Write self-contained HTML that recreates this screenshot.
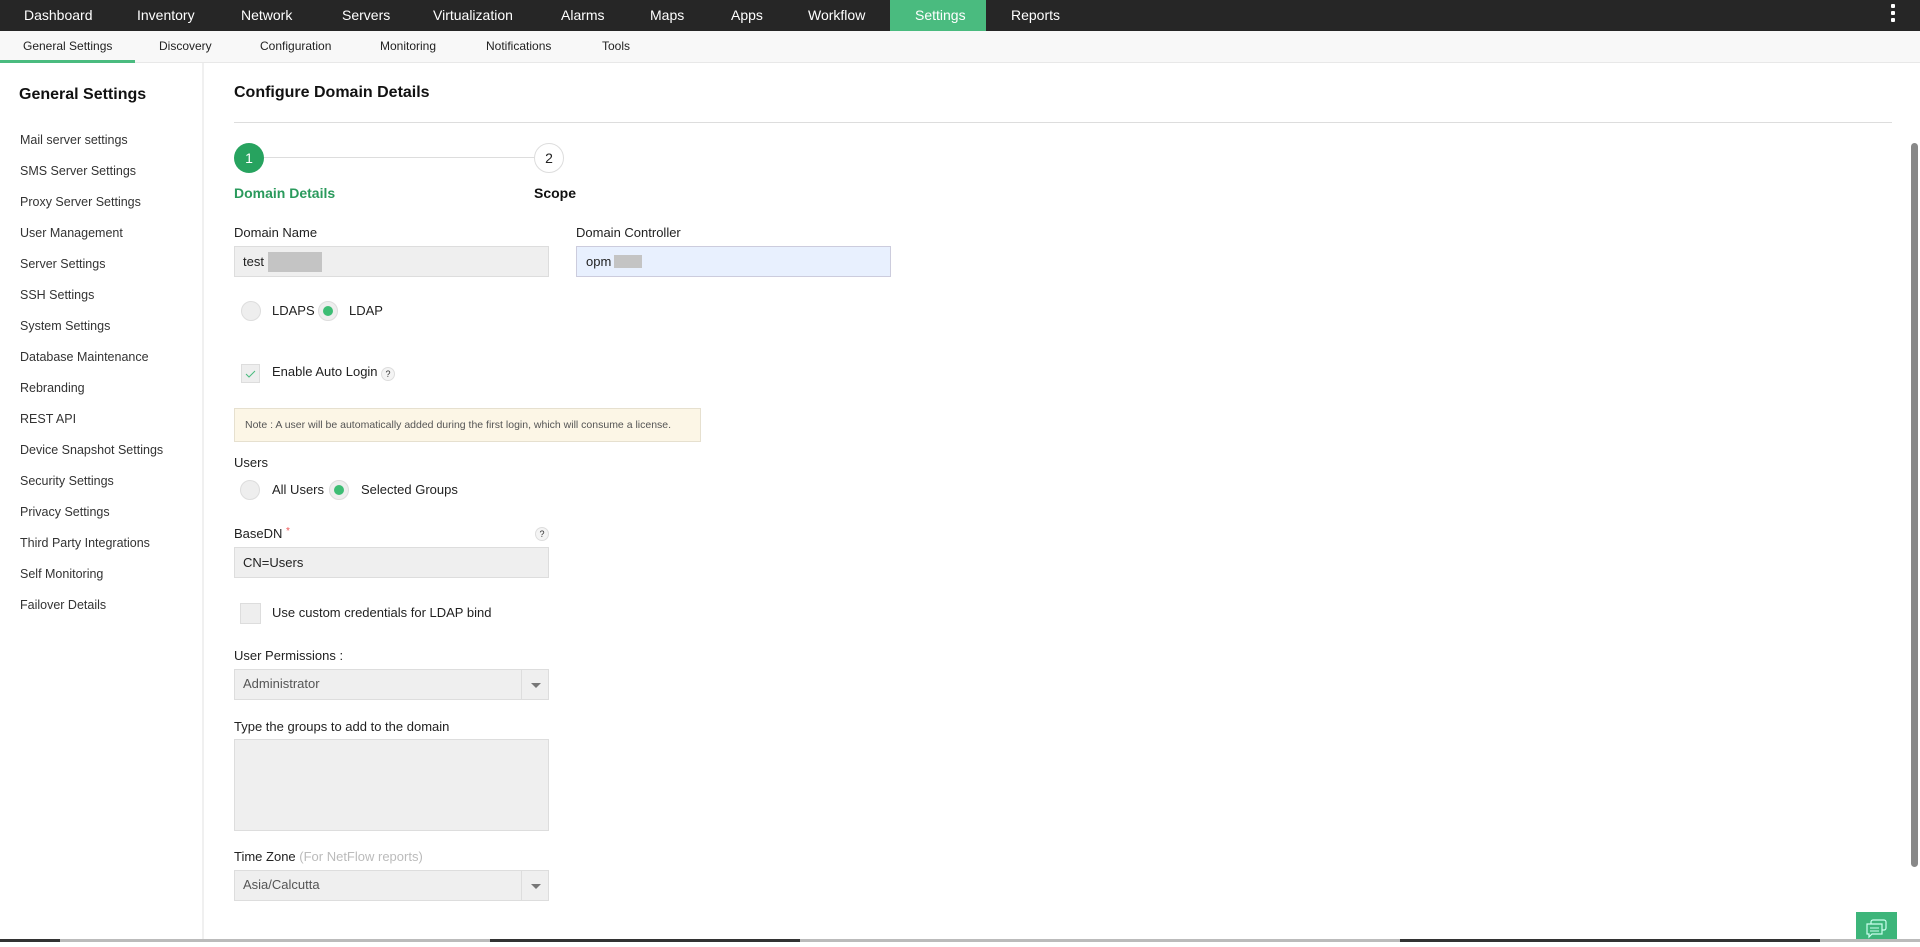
<!DOCTYPE html>
<html><head><meta charset="utf-8"><style>
*{margin:0;padding:0;box-sizing:border-box}
body{width:1920px;height:942px;overflow:hidden;background:#fff;font-family:"Liberation Sans",sans-serif;color:#222;position:relative}
.a{position:absolute;white-space:nowrap}
.top{left:0;top:0;width:1920px;height:31px;background:#262626}
.top span{position:absolute;top:7px;color:#fff;font-size:14px}
.sub{left:0;top:31px;width:1920px;height:32px;background:#f8f8f8;border-bottom:1px solid #e8e8e8}
.sub span{position:absolute;top:8px;font-size:12px;color:#222}
.side{left:0;top:63px;width:204px;height:879px;background:#fff;border-right:2px solid #f0f0f0}
.si{left:20px;font-size:12.5px;color:#333}
.lbl{font-size:13px;color:#222}
.inp{background:#efefef;border:1px solid #ddd}
.rad{width:20px;height:20px;border-radius:50%;background:#eee;border:1px solid #ddd}
.rad.on::after{content:"";position:absolute;left:4px;top:4px;width:10px;height:10px;border-radius:50%;background:#3dbd74}
.q{width:14px;height:14px;border-radius:50%;border:1px solid #ddd;background:#f4f4f4;font-size:9px;text-align:center;line-height:12px;color:#333}
.arr{position:absolute;right:0;top:0;width:27px;height:100%;border-left:1px solid #ddd}
.arr::after{content:"";position:absolute;left:9px;top:13px;border-left:5px solid transparent;border-right:5px solid transparent;border-top:5px solid #777}
</style></head><body>
<div class="a top">
<span style="left:24px">Dashboard</span><span style="left:137px">Inventory</span><span style="left:241px">Network</span><span style="left:342px">Servers</span><span style="left:433px">Virtualization</span><span style="left:561px">Alarms</span><span style="left:650px">Maps</span><span style="left:731px">Apps</span><span style="left:808px">Workflow</span>
<div style="position:absolute;left:890px;top:0;width:96px;height:31px;background:#4abb7f"></div>
<span style="left:915px">Settings</span><span style="left:1011px">Reports</span>
<div style="position:absolute;left:1891px;top:4px;width:4px;height:4px;background:#fff;border-radius:1px;box-shadow:0 7px 0 #fff,0 14px 0 #fff"></div>
</div>
<div class="a sub">
<span style="left:23px">General Settings</span><span style="left:159px">Discovery</span><span style="left:260px">Configuration</span><span style="left:380px">Monitoring</span><span style="left:486px">Notifications</span><span style="left:602px">Tools</span>
<div style="position:absolute;left:0;top:29px;width:135px;height:3px;background:#4abb7f"></div>
</div>
<div class="a side"></div>
<div class="a" style="left:19px;top:86px;font-size:16px;font-weight:bold;color:#111">General Settings</div>
<div class="a si" style="top:133px">Mail server settings</div>
<div class="a si" style="top:164px">SMS Server Settings</div>
<div class="a si" style="top:195px">Proxy Server Settings</div>
<div class="a si" style="top:226px">User Management</div>
<div class="a si" style="top:257px">Server Settings</div>
<div class="a si" style="top:288px">SSH Settings</div>
<div class="a si" style="top:319px">System Settings</div>
<div class="a si" style="top:350px">Database Maintenance</div>
<div class="a si" style="top:381px">Rebranding</div>
<div class="a si" style="top:412px">REST API</div>
<div class="a si" style="top:443px">Device Snapshot Settings</div>
<div class="a si" style="top:474px">Security Settings</div>
<div class="a si" style="top:505px">Privacy Settings</div>
<div class="a si" style="top:536px">Third Party Integrations</div>
<div class="a si" style="top:567px">Self Monitoring</div>
<div class="a si" style="top:598px">Failover Details</div>

<div class="a" style="left:234px;top:84px;font-size:16px;font-weight:bold;color:#111">Configure Domain Details</div>
<div class="a" style="left:234px;top:122px;width:1658px;height:1px;background:#ddd"></div>
<div class="a" style="left:263px;top:157px;width:272px;height:1px;background:#ddd"></div>
<div class="a" style="left:234px;top:143px;width:30px;height:30px;border-radius:50%;background:#27a35f;color:#fff;font-size:14px;text-align:center;line-height:30px">1</div>
<div class="a" style="left:534px;top:143px;width:30px;height:30px;border-radius:50%;background:#fff;border:1px solid #ddd;font-size:14px;text-align:center;line-height:28px">2</div>
<div class="a" style="left:234px;top:185px;font-size:14px;font-weight:bold;color:#2a9a5c">Domain Details</div>
<div class="a" style="left:534px;top:185px;font-size:14px;font-weight:bold;color:#111">Scope</div>

<div class="a lbl" style="left:234px;top:225px">Domain Name</div>
<div class="a inp" style="left:234px;top:246px;width:315px;height:31px"></div>
<div class="a lbl" style="left:243px;top:254px">test</div>
<div class="a" style="left:268px;top:252px;width:54px;height:20px;background:#c4c4c4"></div>
<div class="a lbl" style="left:576px;top:225px">Domain Controller</div>
<div class="a" style="left:576px;top:246px;width:315px;height:31px;background:#e8f0fe;border:1px solid #ccd"></div>
<div class="a lbl" style="left:586px;top:254px">opm</div>
<div class="a" style="left:614px;top:255px;width:28px;height:13px;background:#c4c4c4"></div>

<div class="a rad" style="left:241px;top:301px"></div>
<div class="a lbl" style="left:272px;top:303px">LDAPS</div>
<div class="a rad on" style="left:318px;top:301px"></div>
<div class="a lbl" style="left:349px;top:303px">LDAP</div>

<div class="a" style="left:241px;top:364px;width:19px;height:19px;background:#eee;border:1px solid #ddd"><svg width="17" height="17" style="position:absolute;left:0;top:0"><path d="M4 9l3 3 6-6" stroke="#4abb7f" fill="none" stroke-width="1"/></svg></div>
<div class="a lbl" style="left:272px;top:364px">Enable Auto Login</div>
<div class="a q" style="left:381px;top:367px">?</div>

<div class="a" style="left:234px;top:408px;width:467px;height:34px;background:#fcf6e6;border:1px solid #e6e0cf"></div>
<div class="a" style="left:245px;top:419px;font-size:10.5px;color:#555">Note : A user will be automatically added during the first login, which will consume a license.</div>

<div class="a lbl" style="left:234px;top:455px">Users</div>
<div class="a rad" style="left:240px;top:480px"></div>
<div class="a lbl" style="left:272px;top:482px">All Users</div>
<div class="a rad on" style="left:329px;top:480px"></div>
<div class="a lbl" style="left:361px;top:482px">Selected Groups</div>

<div class="a lbl" style="left:234px;top:526px">BaseDN <span style="color:#e55;font-size:10px;vertical-align:top">*</span></div>
<div class="a q" style="left:535px;top:527px">?</div>
<div class="a inp" style="left:234px;top:547px;width:315px;height:31px"></div>
<div class="a lbl" style="left:243px;top:555px">CN=Users</div>

<div class="a" style="left:240px;top:603px;width:21px;height:21px;background:#eee;border:1px solid #ddd"></div>
<div class="a lbl" style="left:272px;top:605px">Use custom credentials for LDAP bind</div>

<div class="a lbl" style="left:234px;top:648px">User Permissions :</div>
<div class="a inp" style="left:234px;top:669px;width:315px;height:31px"><div class="arr"></div></div>
<div class="a lbl" style="left:243px;top:676px;color:#555">Administrator</div>

<div class="a lbl" style="left:234px;top:719px">Type the groups to add to the domain</div>
<div class="a inp" style="left:234px;top:739px;width:315px;height:92px"></div>

<div class="a lbl" style="left:234px;top:849px">Time Zone <span style="color:#bbb">(For NetFlow reports)</span></div>
<div class="a inp" style="left:234px;top:870px;width:315px;height:31px"><div class="arr"></div></div>
<div class="a lbl" style="left:243px;top:877px;color:#555">Asia/Calcutta</div>

<div class="a" style="left:1911px;top:143px;width:7px;height:724px;background:#888;border-radius:4px"></div>
<div class="a" style="left:1856px;top:912px;width:41px;height:30px;background:#3db57a"><svg width="41" height="30"><rect x="15" y="8" width="15" height="10" rx="2" fill="none" stroke="#cfe" stroke-width="1.2"/><path d="M11 12h15v10H16l-3 3v-3h-2z" fill="#3db57a" stroke="#cfe" stroke-width="1.2"/><path d="M14 16h9M14 19h9" stroke="#cfe"/></svg></div>
<div class="a" style="left:0;top:939px;width:1920px;height:3px;background:#bbb"></div>
<div class="a" style="left:0;top:939px;width:60px;height:3px;background:#333"></div>
<div class="a" style="left:490px;top:939px;width:310px;height:3px;background:#333"></div>
<div class="a" style="left:1400px;top:939px;width:420px;height:3px;background:#333"></div>
</body></html>
